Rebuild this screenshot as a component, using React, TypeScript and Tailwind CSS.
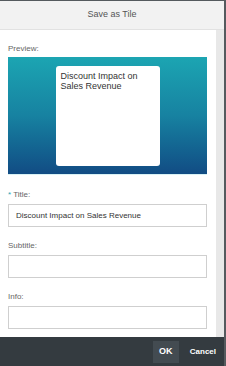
export default function App() {
  const font = { fontFamily: '"Liberation Sans", Arial, sans-serif' };
  return (
    <div
      style={font}
      className="w-[226px] h-[366px] flex flex-col border-t border-r-2 border-[#555a5e] bg-white overflow-hidden"
    >
      <div className="h-[29px] shrink-0 bg-[#f2f2f2] border-b border-[#e2e2e2] flex items-center justify-center text-[9px] text-[#555]">
        Save as Tile
      </div>

      <div className="flex-1 flex min-h-0">
        <div className="w-[216px] pl-[8px] pr-[9px] pt-[14px] flex flex-col">
          <span className="text-[8px] leading-[10px] text-[#666]">Preview:</span>
          <div className="mt-[3px] h-[118px] bg-gradient-to-b from-[#1ca5b2] via-[#1782a1] to-[#124c84] border-b border-[#d9f2f5] flex justify-center pt-[9px]">
            <div className="w-[104px] h-[100px] bg-white rounded-[3px] px-[5px] pt-[5px] text-[9px] leading-[10px] text-[#333]">
              Discount Impact on Sales Revenue
            </div>
          </div>

          <Field label="Title:" required value="Discount Impact on Sales Revenue" first />
          <Field label="Subtitle:" />
          <Field label="Info:" />
        </div>
        <div className="w-[8px] bg-[#e8e8e8]" />
      </div>

      <div className="h-[29px] shrink-0 bg-[#343b40] flex items-center justify-end pr-[1px]">
        <button className="w-[26px] h-[22px] bg-[#434b51] text-white text-[9px] font-bold">OK</button>
        <button className="h-[22px] pl-[11px] pr-[7px] text-white text-[8px] font-bold">Cancel</button>
      </div>
    </div>
  );
}

function Field({
  label,
  value = "",
  required = false,
  first = false,
}: {
  label: string;
  value?: string;
  required?: boolean;
  first?: boolean;
}) {
  return (
    <div className={first ? "mt-[15px]" : "mt-[14px]"}>
      <div className="text-[8px] leading-[10px] text-[#666] mb-[4px]">
        {required && <span className="text-[#2aa6b5] mr-[2px]">*</span>}
        {label}
      </div>
      <div className="h-[23px] border border-[#cfcfcf] bg-white flex items-center pl-[7px] text-[8px] text-[#333]">
        {value}
      </div>
    </div>
  );
}
